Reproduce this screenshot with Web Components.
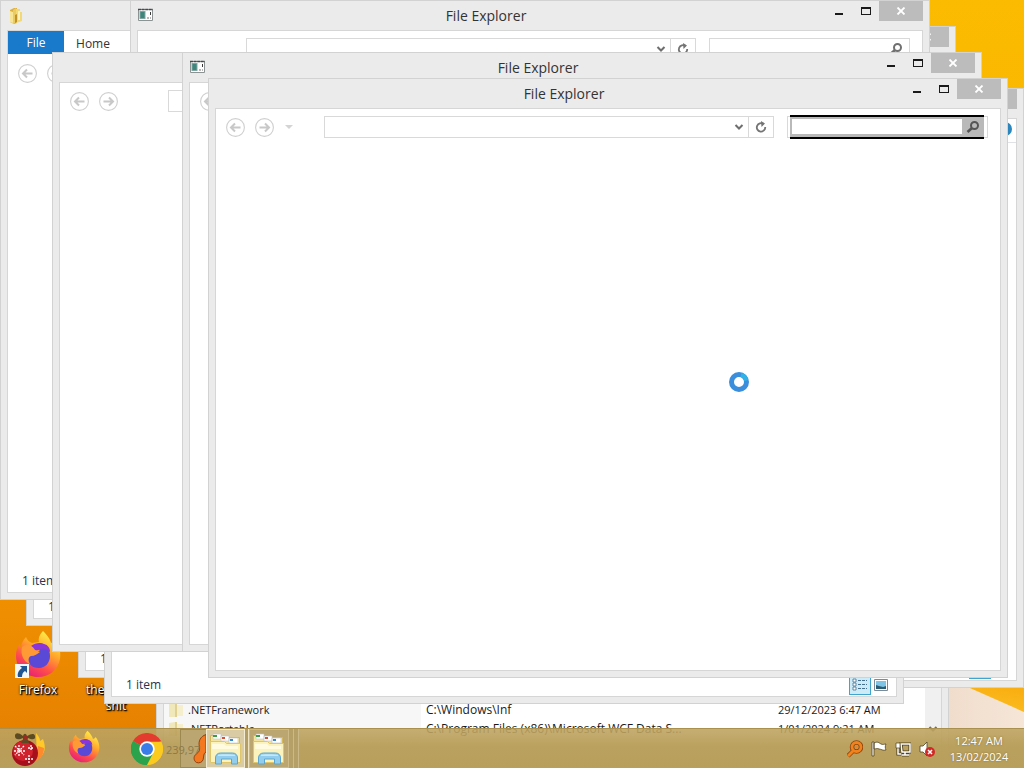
<!DOCTYPE html>
<html lang="en">
<head>
<meta charset="utf-8">
<meta name="viewport" content="width=device-width, initial-scale=1">
<title>Desktop</title>
<style>
  html, body {
    height: 100%;
    margin: 0;
  }
  body {
    font: 12px/16px "Open Sans", "Noto Sans", sans-serif;
    color: #1e1e1e;
    overflow: hidden;
  }
  /* windows are placed freely on the desktop */
  explorer-window {
    position: absolute;
    width: 800px;
    height: 600px;
  }
  explorer-window.wide { width: 930px; }
  #list { left: 156px; top: 640px; width: 793px; }
  #help { left: 224px; top: 88px; }
  #c1 { left: 26px; top: 26px; }
  #c2 { left: 78px; top: 78px; }
  #c3 { left: 104px; top: 104px; }
  #first { left: 0; top: 0; }
  #second { left: 130px; top: 0; }
  #third { left: 52px; top: 52px; }
  #fourth { left: 182px; top: 52px; }
  #front { left: 208px; top: 78px; }
  desktop-icon {
    position: absolute;
    bottom: 54px;
  }
  desktop-icon[art] { bottom: 70px; }
  busy-cursor {
    position: absolute;
    left: 729px;
    top: 372px;
  }
</style>
</head>
<body>
<desk-top>
  <desktop-icon style="left:0" name="Firefox" art="firefox"></desktop-icon>
  <desktop-icon style="left:78px" name="the" more="shit"></desktop-icon>

  <explorer-window id="list"><file-list></file-list></explorer-window>
  <explorer-window id="help"><ribbon-tabs help></ribbon-tabs><nav-bar></nav-bar><status-bar></status-bar></explorer-window>
  <explorer-window id="c1" class="wide"><ribbon-tabs></ribbon-tabs><nav-bar></nav-bar><status-bar>1 item</status-bar></explorer-window>
  <explorer-window id="c2" class="wide"><ribbon-tabs></ribbon-tabs><nav-bar></nav-bar><status-bar>1 item</status-bar></explorer-window>
  <explorer-window id="c3"><ribbon-tabs></ribbon-tabs><nav-bar></nav-bar><status-bar>1 item</status-bar></explorer-window>
  <explorer-window id="first" class="wide" icon="folder"><ribbon-tabs labels></ribbon-tabs><nav-bar></nav-bar><status-bar>1 item</status-bar></explorer-window>
  <explorer-window id="second" heading="File Explorer" icon="app"><nav-bar history="none"></nav-bar></explorer-window>
  <explorer-window id="third" class="wide"><nav-bar history="short"></nav-bar></explorer-window>
  <explorer-window id="fourth" heading="File Explorer" icon="app"><nav-bar></nav-bar></explorer-window>
  <explorer-window id="front" heading="File Explorer"><nav-bar active></nav-bar></explorer-window>
  <busy-cursor></busy-cursor>

  <task-bar slot="bar"></task-bar>
</desk-top>

<script>
const art = {
  folder: `<svg width="16" height="18" viewBox="0 0 16 18"><path fill="#dcb040" d="M2 3l4-2h3v15l-3 1-4-2z"/><path fill="#f8e597" d="M2 4l3 1v11l-3-1z"/><path fill="#eccb62" d="M5 3l3-2v14l-3 2z"/><path fill="#f3d976" d="M8 2h4v3h2v9l-6 2z"/><path fill="#c2922a" d="M7 8l2-1v8l-2 1z"/><path fill="#fdf3c0" d="M10 4h2v9h-2z"/></svg>`,
  app: `<svg width="16" height="16" viewBox="0 0 16 16"><path fill="#fff" stroke="#8d9292" d="M.5 2.500h14v11H.5z"/><path stroke="#444a4b" stroke-width="1.500" stroke-dasharray="3 .6" d="M0 2.500h15"/><path fill="#7fa6a0" d="M1.500 4h6v8h-6z"/><path fill="#3f857c" d="M2.500 5h4v6h-4z"/><path fill="#3a3a3a" d="M12 5h1v3h-1z"/><path fill="#b7b7b7" d="M9 10h2v2H9zM12 10h1v2h-1z"/></svg>`,
  firefox: `<svg viewBox="1 0 46 48"><defs><linearGradient id="f" x1=".8" y1="0" x2=".25" y2="1"><stop offset=".05" stop-color="#fff04a"/><stop offset=".4" stop-color="#ffa52c"/><stop offset=".7" stop-color="#ff4f4a"/><stop offset="1" stop-color="#e5197f"/></linearGradient></defs><path fill="url(#f)" d="M29 1c5 5 7 8 8 12 2-1 3-1 4-3 5 7 6 13 5 19-2 11-11 18-22 18C12 47 2 38 2 26c0-5 1-9 4-12 0 2 0 3 1 4 0-4 2-8 5-11 1 3 3 5 6 6l7-1C24 8 26 4 29 1z"/><path fill="#5a48d6" d="M24 14c6-2 12 4 12 12 0 7-5 12-11 12-7 0-11-4-11-10 0-4 2-7 5-8 2 3 5 2 7 0l-4-2z"/><path fill="#8b35d8" d="M17 16c4-3 9-4 13-2 4 1 6 4 6 8-3-3-6-4-9-3-4 2-7 2-9-1z"/><path fill="#ff9a34" d="M8 17c5-4 10-2 13 3l5 2c-3 2-5 4-9 4-3 1-3 5-1 8-6-2-10-9-8-17z"/></svg>`,
  ornament: `<svg width="36" height="36" viewBox="0 0 36 36"><path fill="#ffc928" d="M26 2c3 4 4 5 4 8l3-2c3 8 3 15-6 21z"/><path fill="#ff8a2e" d="M28 15l6 2c0 6-3 10-8 13z"/><circle cx="15" cy="22" r="13" fill="#a5101b"/><circle cx="13" cy="20" r="10" fill="#d0222d"/><path stroke="#fff" stroke-width="1.300" stroke-dasharray="2 1" d="M9 14v12M4 20h11M5 15l9 9M14 15l-9 9M19 24v8M15 28h8M21 14v6M18 17h6"/><path fill="#5b4a22" d="M13 5c-5-4-8-3-8 0 0 4 4 4 8 2 0 4-2 4-2 5h8c0-2-2-3-1-5 4 2 8 2 7-2-1-3-4-2-8 0-1-3-3-3-4 0z"/><path fill="#9a2a22" d="M13 5h4v4h-4z"/></svg>`,
  chrome: `<svg width="32" height="32" viewBox="0 0 48 48"><path fill="#e33b2e" d="M24 24L3.200 12A24 24 0 0 1 44.800 12z"/><path fill="#fccb1f" d="M24 24h0l20.800-12A24 24 0 0 1 24 48z"/><path fill="#2ba24c" d="M24 24v24A24 24 0 0 1 3.200 12z"/><path fill="#e33b2e" d="M24 13h21a24 24 0 0 0-1-2H24z"/><path fill="#fccb1f" d="M33.500 29.500L24 48a24 24 0 0 0 21-35H24z"/><path fill="#2ba24c" d="M14.500 29.500L3.200 12A24 24 0 0 0 24 48l9.500-18.500z"/><circle cx="24" cy="24" r="11.500" fill="#fff"/><circle cx="24" cy="24" r="9" fill="#3a7de8"/></svg>`,
  finder: `<svg width="26" height="32" viewBox="0 0 26 32"><path fill="#f4781f" stroke="#8f3d0c" d="M26 1c-6 2-8 7-7 12 1 4 0 6-4 9-2 2-2 6 1 8 3 1 6 0 7-3 1-4 0-6 3-8z"/></svg>`,
  explorer: `<svg width="34" height="32" viewBox="0 0 34 32"><path fill="#f5e59a" stroke="#d3b75c" d="M1.500 2.500h10l2 2h17v23h-29z"/><path fill="#fff" stroke="#c4c4c4" stroke-width=".6" d="M4 1h8v5H4zM12 3h8v5h-8zM20 5h9v5h-9z"/><path fill="#3b9c43" d="M4 2h4v2H4z"/><path fill="#d94f31" d="M13 4h3v2h-3z"/><path fill="#3489c9" d="M21 6h3v2h-3z"/><path fill="#fbf3bb" stroke="#dfc66c" d="M1.500 8.500h14l2 2h14v19h-30z"/><path fill="#fffbe0" d="M3 11h12l2 2h12v3H3z"/><path fill="#93cdee" stroke="#5aa6d2" d="M6.500 31v-6c0-3 2-5 5-5h12c3 0 5 2 5 5v6h-6v-5h-10v5z"/><path fill="#c6e7f8" d="M9 22c1-1 15-1 17 0v1H9z"/></svg>`,
  magnifier: `<svg width="14" height="14" viewBox="0 0 14 14"><circle cx="8.500" cy="5.500" r="3.500" fill="none" stroke="currentColor" stroke-width="2"/><path stroke="currentColor" stroke-width="2.600" d="M6 8l-4.500 4"/></svg>`,
  chevron: `<svg width="10" height="8" viewBox="0 0 10 8"><path fill="none" stroke="#6e6e6e" stroke-width="2" d="M1.500 2L5 5.500 8.500 2"/></svg>`,
  refresh: `<svg width="12" height="12" viewBox="0 0 12 12"><path fill="none" stroke="#747474" stroke-width="1.800" d="M8.500 3A4.200 4.200 0 1 0 10.200 6"/><path fill="#747474" d="M6 0l4 2.500L6.500 6z"/></svg>`,
  back: `<svg width="19" height="19" viewBox="0 0 19 19"><circle cx="9.500" cy="9.500" r="8.900" fill="#fff" stroke="#cfcfcf" stroke-width="1.100"/><path fill="none" stroke="#c8c8c8" stroke-width="2" d="M14.500 9.500H6M9 5.500l-4 4 4 4"/></svg>`,
  forward: `<svg width="19" height="19" viewBox="0 0 19 19"><circle cx="9.500" cy="9.500" r="8.900" fill="#fff" stroke="#cfcfcf" stroke-width="1.100"/><path fill="none" stroke="#c8c8c8" stroke-width="2" d="M4.500 9.500H13M10 5.500l4 4-4 4"/></svg>`,
};

const buttonReset = `
  button {
    display: flex;
    align-items: center;
    justify-content: center;
    padding: 0;
    border: 0;
    background: none;
    font: inherit;
    color: inherit;
  }
  svg { display: block; }
`;

class DeskTop extends HTMLElement {
  constructor() {
    super();
    this.attachShadow({ mode: "open" });
    this.shadowRoot.innerHTML = `
    <style>
      :host {
        display: grid;
        position: relative;
        height: 100vh;
        overflow: hidden;
        background: linear-gradient(#fbbb00 0%, #fab600 30%, #f09000 78%, #e37d00 100%);
      }
      .paper {
        grid-area: 1 / 1;
        width: 100%;
        height: 100%;
      }
      ::slotted([slot=bar]) {
        grid-area: 1 / 1;
        align-self: end;
        z-index: 5;
      }
    </style>
    <svg class="paper" viewBox="0 0 1024 768" preserveAspectRatio="none" aria-hidden="true">
      <defs>
        <linearGradient id="sand" x1="0" y1="0" x2="1" y2="0"><stop offset="0" stop-color="#eed7c4"/><stop offset="1" stop-color="#f5e6d8"/></linearGradient>
        <linearGradient id="ray" x1="0" y1="1" x2=".4" y2="0"><stop offset="0" stop-color="#f09a10"/><stop offset=".4" stop-color="#fbb91c"/><stop offset="1" stop-color="#f8a90c"/></linearGradient>
      </defs>
      <path fill="url(#sand)" d="M900 650h124v118H900z"/>
      <path fill="url(#ray)" d="M936 673l88 39v-40z"/>
    </svg>
    <slot></slot>
    <slot name="bar"></slot>
    `;
  }
}

class DesktopIcon extends HTMLElement {
  constructor() {
    super();
    this.attachShadow({ mode: "open" });
  }

  connectedCallback() {
    const picture = this.getAttribute("art");
    const more = this.getAttribute("more");
    this.shadowRoot.innerHTML = `
    <style>
      ${buttonReset}
      :host { display: block; width: 76px; }
      button { flex-direction: column; width: 100%; }
      .art { position: relative; width: 46px; height: 48px; }
      .art > svg { width: 46px; height: 48px; }
      .arrow {
        position: absolute;
        left: 0;
        bottom: 0;
      }
      .label {
        width: 60px;
        margin-top: 4px;
        color: #fff;
        text-shadow: 1px 1px 2px #000, 0 0 2px #000, 1px 1px 1px #000;
      }
      .label span { display: block; }
      .split span:first-child { text-align: left; }
    </style>
    <button>
      ${picture ? `<span class="art">${art[picture]}
        <svg class="arrow" style="width:14px;height:14px" viewBox="0 0 14 14"><path fill="#f4f7fa" d="M0 0h14v14H0z"/><path fill="#1f5593" d="M5 2h7v7l-2-2c-2 1-3 3-3 6H3c-1-4 1-7 4-9z"/></svg></span>` : ""}
      <span class="label ${more ? "split" : ""}"><span>${this.getAttribute("name")}</span>${more ? `<span>${more}</span>` : ""}</span>
    </button>
    `;
  }
}

class ExplorerWindow extends HTMLElement {
  constructor() {
    super();
    this.attachShadow({ mode: "open" });
  }

  connectedCallback() {
    const icon = this.getAttribute("icon");
    this.shadowRoot.innerHTML = `
    <style>
      ${buttonReset}
      :host {
        display: flex;
        flex-direction: column;
        box-sizing: border-box;
        padding: 0 6px 6px;
        border: 1px solid #d2d2d2;
        background: #ebebeb;
      }
      header {
        display: flex;
        height: 29px;
        flex: none;
      }
      .icon { width: 17px; padding: 6px 0 0 1px; box-sizing: border-box; }
      h1 {
        flex: 1;
        margin: 0;
        padding-right: 7px;
        font-size: 14px;
        font-weight: 400;
        line-height: 30px;
        text-align: center;
        color: #333;
      }
      header button { width: 27px; height: 20px; }
      header .close { width: 44px; background: #bcbcbc; }
      main {
        flex: 1;
        display: flex;
        flex-direction: column;
        min-height: 0;
        border: 1px solid #d6d6d6;
        background: #fff;
      }
      ::slotted(status-bar) { margin-top: auto; }
    </style>
    <header>
      <span class="icon">${icon ? art[icon] : ""}</span>
      <h1>${this.getAttribute("heading") || ""}</h1>
      <button aria-label="Minimize"><svg width="10" height="10"><path fill="#1a1a1a" d="M1 7h8v2H1z"/></svg></button>
      <button aria-label="Maximize"><svg width="10" height="10"><path fill="#1a1a1a" d="M0 1h10v8H0zM1 3v5h8V3z" fill-rule="evenodd"/></svg></button>
      <button class="close" aria-label="Close"><svg width="10" height="8"><path stroke="#fff" stroke-width="1.800" d="M1.500.5l7 7M8.500.5l-7 7"/></svg></button>
    </header>
    <main><slot></slot></main>
    `;
  }
}

class RibbonTabs extends HTMLElement {
  constructor() {
    super();
    this.attachShadow({ mode: "open" });
  }

  connectedCallback() {
    const labels = this.hasAttribute("labels");
    this.shadowRoot.innerHTML = `
    <style>
      ${buttonReset}
      :host {
        display: flex;
        height: 23px;
        flex: none;
        border-bottom: 1px solid #e0e3e6;
      }
      :host([labels]) { border-color: #fff; }
      .file { width: 56px; height: 23px; background: #1979ca; color: #fff; }
      .home { width: 58px; padding-top: 2px; color: #333; }
      .help {
        width: 14px;
        height: 14px;
        margin: 3px 4px 0 auto;
        border-radius: 50%;
        background: #2b86bd;
      }
    </style>
    ${labels ? `<button class="file">File</button><button class="home">Home</button>` : ""}
    ${this.hasAttribute("help") ? `<button class="help" aria-label="Help"></button>` : ""}
    `;
  }
}

class NavBar extends HTMLElement {
  constructor() {
    super();
    this.attachShadow({ mode: "open" });
    this.shadowRoot.innerHTML = `
    <style>
      ${buttonReset}
      :host {
        display: flex;
        align-items: center;
        flex: none;
        padding: 7px 12px 7px 10px;
      }
      .back, .forward { margin-right: 10px; }
      .recent { width: 10px; margin-right: 30px; }
      :host([history=none]) .back,
      :host([history=none]) .forward,
      :host([history]) .recent {
        visibility: hidden;
      }
      .box {
        display: flex;
        box-sizing: border-box;
        height: 22px;
        border: 1px solid #d9d9d9;
        background: #fff;
      }
      input {
        flex: 1;
        min-width: 0;
        padding: 0 4px;
        border: 0;
        outline: 0;
        background: #fff;
        font: inherit;
      }
      .address { flex: 1; margin-right: 13px; }
      .address button { width: 18px; }
      .address .refresh { width: 25px; border-left: 1px solid #d9d9d9; }
      .search { width: 201px; color: #707070; padding: 0 2px; }
      .field { display: flex; flex: 1; }
      .field button { width: 22px; }
      :host([active]) .field {
        margin: -2px 1px -2px 0;
        padding-left: 2px;
        border: solid #000;
        border-width: 2px 0;
        background: #b9b9b9;
      }
      :host([active]) .field input { margin: 2px 0 3px; }
      :host([active]) .field button { color: #555; }
    </style>
    <button class="back" aria-label="Back">${art.back}</button>
    <button class="forward" aria-label="Forward">${art.forward}</button>
    <button class="recent" aria-label="Recent locations"><svg width="8" height="5"><path fill="#d4d4d4" d="M0 0h8L4 4z"/></svg></button>
    <div class="box address">
      <input type="text" aria-label="Address">
      <button aria-label="Previous locations">${art.chevron}</button>
      <button class="refresh" aria-label="Refresh">${art.refresh}</button>
    </div>
    <div class="box search">
      <div class="field">
        <input type="text" aria-label="Search">
        <button aria-label="Start search">${art.magnifier}</button>
      </div>
    </div>
    `;
  }
}

class StatusBar extends HTMLElement {
  constructor() {
    super();
    this.attachShadow({ mode: "open" });
    this.shadowRoot.innerHTML = `
    <style>
      ${buttonReset}
      :host {
        display: flex;
        align-items: center;
        flex: none;
        height: 22px;
        padding: 0 5px 0 14px;
        color: #26344f;
      }
      .count { flex: 1; }
      button { width: 20px; height: 20px; }
      .on {
        width: 22px;
        box-sizing: border-box;
        border: 1px solid #3ea5cf;
        background: #cdeaf7;
      }
    </style>
    <span class="count"><slot></slot></span>
    <button class="on" aria-label="Details"><svg width="18" height="18"><path stroke="#467090" stroke-dasharray="3 1" stroke-width="1.200" d="M7 4.500h9M7 8.500h9M7 12.500h9"/><path fill="#fff" stroke="#467090" stroke-width=".8" d="M2 3h3v3H2zM2 7h3v3H2zM2 11h3v3H2z"/></svg></button>
    <button aria-label="Large icons"><svg width="14" height="12"><path fill="#fff" stroke="#7a8a96" d="M.5.5h13v11H.5z"/><path fill="#7fc4e4" d="M2 2h10v8H2z"/><path fill="#2d5c72" d="M2 6l3 1 4 1 3-1v3H2z"/></svg></button>
    `;
  }
}

class FileList extends HTMLElement {
  constructor() {
    super();
    this.attachShadow({ mode: "open" });
    const rows = [
      [".NETFramework", "C:\\Windows\\Inf", "29/12/2023 6:47 AM"],
      [".NETPortable", "C:\\Program Files (x86)\\Microsoft WCF Data S...", "1/01/2024 9:21 AM"],
    ];
    this.shadowRoot.innerHTML = `
    <style>
      :host { display: flex; flex: 1; color: #1a1a1a; }
      .files { flex: 1; padding-top: 29px; }
      table { width: 100%; border-collapse: collapse; table-layout: fixed; font-size: 11px; }
      td { height: 19px; padding: 0 0 0 5px; line-height: 19px; white-space: nowrap; }
      .name { width: 252px; background: #f7f7f7; }
      .name div { display: flex; align-items: center; gap: 5px; }
      .path { width: 347px; font-size: 12px; }
      .scroll {
        display: flex;
        align-items: flex-start;
        justify-content: center;
        width: 16px;
        padding-top: 54px;
        background: #f0f0f0;
      }
    </style>
    <div class="files"><table>
      ${rows.map(row => `<tr>
        <td class="name"><div><svg width="14" height="16"><path fill="#f0e8bb" d="M0 2l6-1v14H0z"/><path fill="#e0d192" d="M6 1h2v14H6z"/><path fill="#f5efcd" d="M8 3h6v11H8z"/></svg>${row[0]}</div></td>
        <td class="path">${row[1]}</td>
        <td>${row[2]}</td>
      </tr>`).join("")}
    </table></div>
    <div class="scroll">${art.chevron}</div>
    `;
  }
}

class TaskBar extends HTMLElement {
  constructor() {
    super();
    this.attachShadow({ mode: "open" });
    this.shadowRoot.innerHTML = `
    <style>
      ${buttonReset}
      :host {
        display: flex;
        position: relative;
        box-sizing: border-box;
        height: 40px;
        border-top: 1px solid #a9904f;
        background: linear-gradient(rgba(190,163,96,.88), rgba(184,158,90,.97) 45%, #b89f5c);
        color: #fff;
      }
      .pin { width: 56px; }
      .pin.chrome { width: 68px; padding-left: 2px; }
      .pin.firefox svg { width: 32px; height: 33px; margin-bottom: 4px; }
      .app {
        box-sizing: border-box;
        border: 1px solid #9c8952;
        background: #bba671;
      }
      .finder { width: 26px; border-right: 0; }
      .open { width: 39px; border-color: #f4ecd2; background: #d9cca4; }
      .edge {
        box-sizing: border-box;
        width: 4px;
        border-right: 1px solid #efe4c2;
        background: #b39e68;
      }
      .plain { width: 40px; border-color: #cdbb87; }
      .dim { border-color: #cbb987; background: #b5a067; width: 5px; }
      .coords {
        position: absolute;
        left: 166px;
        top: 13px;
        font-size: 11px;
        color: #8c7a4a;
      }
      .tray {
        display: flex;
        align-items: center;
        gap: 8px;
        margin-left: auto;
        padding-right: 9px;
      }
      .tray button { width: 16px; height: 18px; }
      .tray .time {
        width: 72px;
        height: auto;
        font-size: 11px;
        text-align: center;
        text-shadow: 0 0 2px #7c6836;
      }
      .time span { display: block; }
    </style>
    <button class="pin" aria-label="Start">${art.ornament}</button>
    <button class="pin firefox" aria-label="Firefox">${art.firefox}</button>
    <button class="pin chrome" aria-label="Chrome">${art.chrome}</button>
    <button class="app finder" aria-label="Search tool">${art.finder}</button>
    <button class="app open" aria-label="File Explorer windows">${art.explorer}</button>
    <span class="edge"></span>
    <button class="app plain" aria-label="File Explorer">${art.explorer}</button>
    <span class="edge dim"></span>
    <span class="edge dim"></span>
    <span class="coords">239,97</span>
    <div class="tray">
      <button aria-label="Search"><svg width="16" height="18"><circle cx="9.500" cy="7" r="4.500" fill="none" stroke="#8f430b" stroke-width="4.500"/><path stroke="#8f430b" stroke-width="4.500" d="M6 11l-5 5"/><circle cx="9.500" cy="7" r="4.500" fill="none" stroke="#f0831e" stroke-width="2.800"/><path stroke="#f0831e" stroke-width="3" d="M6 11l-5 5"/><circle cx="9.500" cy="7" r="1.500" fill="#f0831e"/></svg></button>
      <button aria-label="Action Center"><svg width="16" height="18"><path fill="#fff" stroke="#51431e" stroke-width=".8" d="M1 2h2v14H1zM3 3c4-2 5 0 7 1 2 1 3 0 5 0-1 2-1 4 0 6-3 1-5-1-7-1-2-1-3 0-5 0z"/></svg></button>
      <button aria-label="Network"><svg width="16" height="18"><path fill="none" stroke="#51431e" stroke-width="3.200" d="M6 4h9v8H7zM7 15h7M10 12v3M3 8v6h3"/><path fill="none" stroke="#fff" stroke-width="1.500" d="M6 4h9v8H7zM7 15h7M10 12v3M3 8v6h3"/><path fill="#fff" stroke="#51431e" stroke-width=".7" d="M1 3h4v5H1z"/></svg></button>
      <button aria-label="Volume muted"><svg width="16" height="18"><path fill="#fff" stroke="#51431e" stroke-width=".8" d="M1 6h3l4-4v14l-4-4H1z"/><circle cx="11" cy="12" r="5" fill="#d02a28"/><path stroke="#fff" stroke-width="1.500" d="M9 10l4 4M13 10l-4 4"/></svg></button>
      <button class="time"><span><span>12:47 AM</span><span>13/02/2024</span></span></button>
    </div>
    `;
  }
}

class BusyCursor extends HTMLElement {
  constructor() {
    super();
    this.attachShadow({ mode: "open" });
    this.shadowRoot.innerHTML = `
    <style>
      :host { display: block; z-index: 6; width: 20px; height: 20px; }
      svg { display: block; }
    </style>
    <svg width="20" height="20" viewBox="0 0 20 20">
      <circle cx="10" cy="10" r="7.500" fill="#fff" stroke="#3a8edb" stroke-width="5"/>
      <path fill="none" stroke="#2fb4e6" stroke-width="4" d="M12 2.800A7.500 7.500 0 0 1 17.300 8.500"/>
    </svg>
    `;
  }
}

customElements.define("desk-top", DeskTop);
customElements.define("desktop-icon", DesktopIcon);
customElements.define("explorer-window", ExplorerWindow);
customElements.define("ribbon-tabs", RibbonTabs);
customElements.define("nav-bar", NavBar);
customElements.define("status-bar", StatusBar);
customElements.define("file-list", FileList);
customElements.define("task-bar", TaskBar);
customElements.define("busy-cursor", BusyCursor);
</script>
</body>
</html>
